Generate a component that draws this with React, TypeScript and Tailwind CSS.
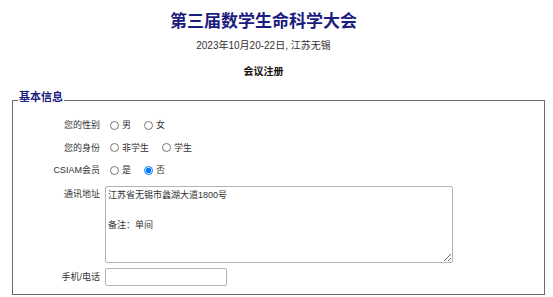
import { useState } from "react";

const font = "font-['Liberation_Sans','Noto_Sans_CJK_SC',sans-serif]";

const Row = ({ label, children }: { label: string; children: React.ReactNode }) => (
  <div className="flex h-[22.5px] items-center">
    <div className="w-[87px] text-right text-[9px] leading-[14px] text-[#333]">{label}</div>
    <div className="flex items-center pl-[5px]">{children}</div>
  </div>
);

const Radio = ({
  name,
  label,
  checked,
  onChange,
}: {
  name: string;
  label: string;
  checked: boolean;
  onChange: () => void;
}) => (
  <label className="mr-[8px] flex items-center text-[9px] leading-[14px] text-[#333]">
    <input
      type="radio"
      name={name}
      checked={checked}
      onChange={onChange}
      className="ml-[5px] mr-[3px] h-[9px] w-[9px]"
    />
    {label}
  </label>
);

export default function App() {
  const [gender, setGender] = useState("");
  const [identity, setIdentity] = useState("");
  const [member, setMember] = useState("no");

  return (
    <div className={`w-[553px] h-[297px] bg-white overflow-hidden ${font}`}>
      <div className="flex w-[527px] flex-col items-center pt-[10px]">
        <h1 className="text-[17px] leading-[24px] font-bold text-[#1c1c7e]">第三届数学生命科学大会</h1>
        <div className="mt-[5px] text-[10px] leading-[14px] text-[#333]">2023年10月20-22日, 江苏无锡</div>
        <div className="mt-[12px] text-[10px] leading-[14px] font-bold text-[#111]">会议注册</div>
      </div>

      <fieldset className="mt-[11px] ml-[12px] mr-[8px] border border-[#6b6b6b] p-0">
        <legend className="ml-[5px] px-[1px] pb-[7px] text-[11px] leading-[14px] font-bold text-[#1c1c7e]">
          基本信息
        </legend>
        <div className="flex flex-col pt-[3px] pb-[8px]">
          <Row label="您的性别">
            <Radio name="gender" label="男" checked={gender === "m"} onChange={() => setGender("m")} />
            <Radio name="gender" label="女" checked={gender === "f"} onChange={() => setGender("f")} />
          </Row>
          <Row label="您的身份">
            <Radio name="identity" label="非学生" checked={identity === "n"} onChange={() => setIdentity("n")} />
            <Radio name="identity" label="学生" checked={identity === "s"} onChange={() => setIdentity("s")} />
          </Row>
          <Row label="CSIAM会员">
            <Radio name="member" label="是" checked={member === "yes"} onChange={() => setMember("yes")} />
            <Radio name="member" label="否" checked={member === "no"} onChange={() => setMember("no")} />
          </Row>

          <div className="mt-[4px] flex">
            <div className="w-[87px] pt-[1px] text-right text-[9px] leading-[15px] text-[#333]">通讯地址</div>
            <textarea
              className="ml-[5px] h-[77px] w-[348px] resize rounded-[2px] border border-[#b4b4b4] px-[2px] py-[1px] text-[9px] leading-[15px] text-[#333]"
              defaultValue={"江苏省无锡市蠡湖大道1800号\n\n备注：单间"}
            />
          </div>

          <div className="mt-[5px] flex items-center">
            <div className="w-[87px] text-right text-[9px] leading-[14px] text-[#333]">手机/电话</div>
            <input
              type="text"
              className="ml-[5px] h-[18px] w-[122px] rounded-[2px] border border-[#b4b4b4] px-[2px] text-[9px]"
            />
          </div>
        </div>
      </fieldset>
    </div>
  );
}
